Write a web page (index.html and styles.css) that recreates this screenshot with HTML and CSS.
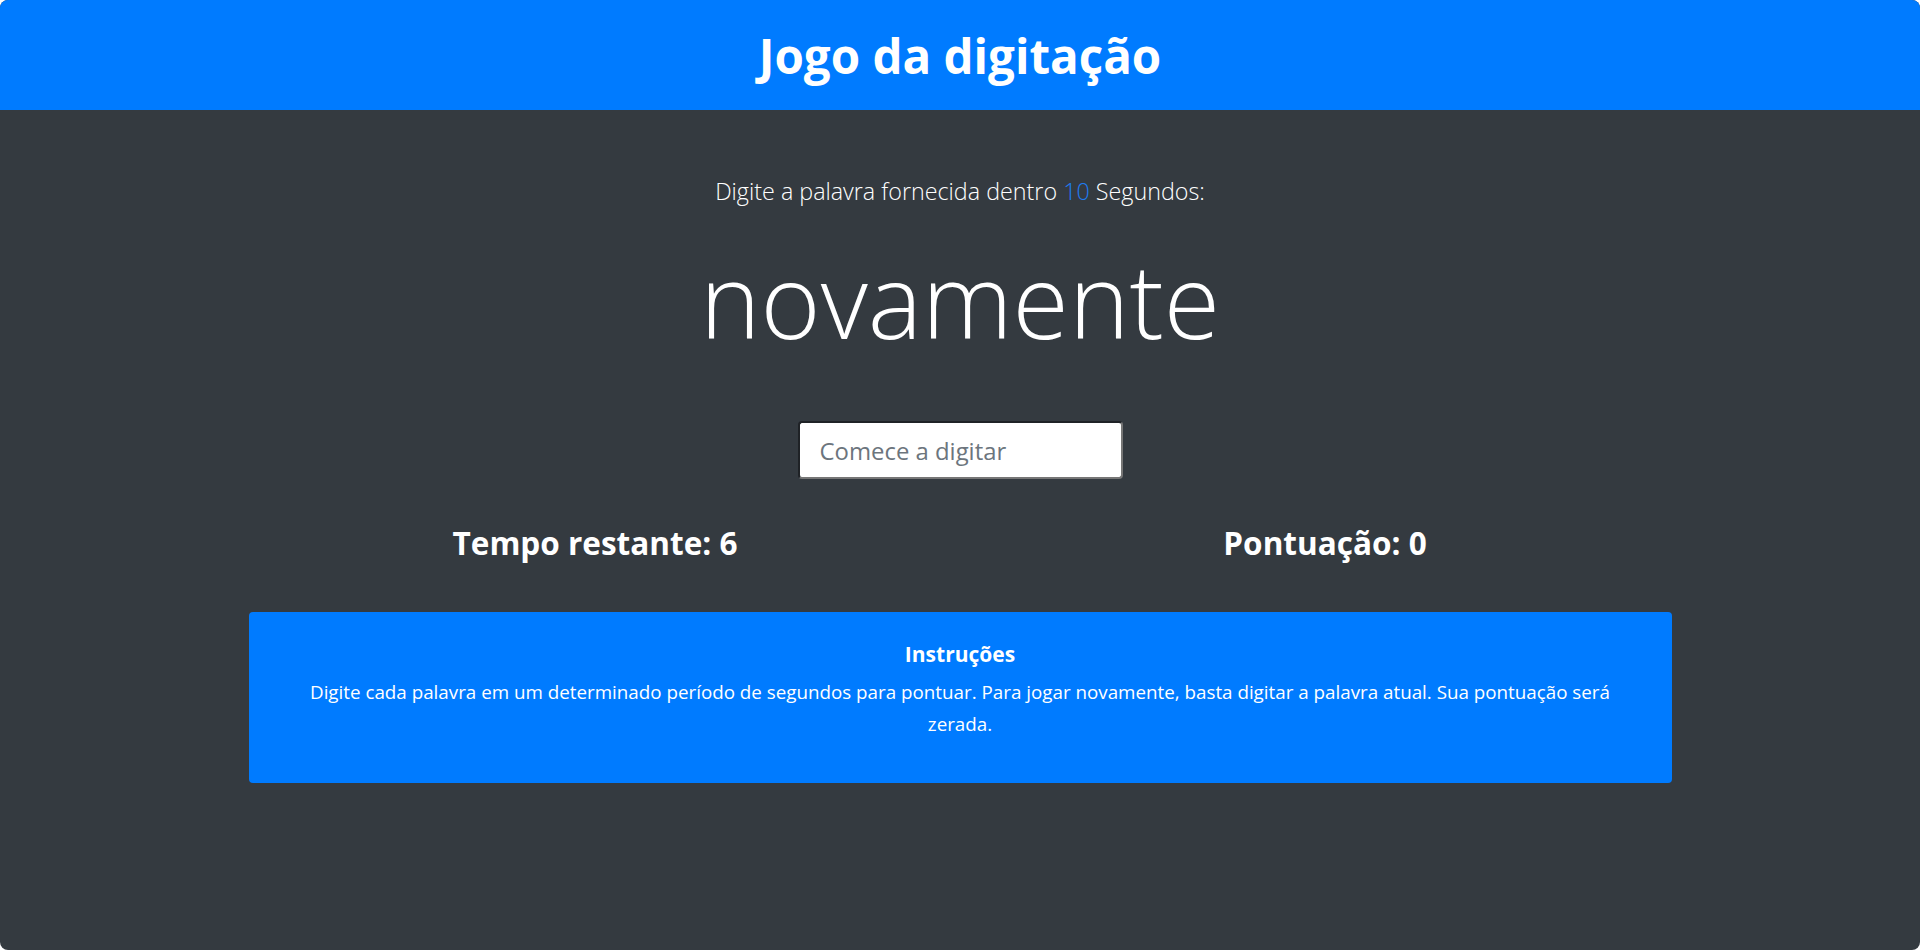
FILE: index.html
```html
<!DOCTYPE html>
<html lang="pt-BR">
<head>
<meta charset="utf-8">
<title>Jogo da digitação</title>
<link rel="stylesheet" href="styles.css">
</head>
<body>
<div class="window">
  <header class="topbar">
    <h1 class="title">Jogo da digitação</h1>
  </header>
  <main class="game">
    <p class="lead">Digite a palavra fornecida dentro <span class="seconds">10</span> Segundos:</p>
    <h2 class="word">novamente</h2>
    <input class="word-input" type="text" placeholder="Comece a digitar" autofocus>
    <div class="stats">
      <h3 class="stat">Tempo restante: <span>6</span></h3>
      <h3 class="stat">Pontuação: <span>0</span></h3>
    </div>
    <section class="card">
      <h5 class="card-title">Instruções</h5>
      <p class="card-text">Digite cada palavra em um determinado período de segundos para pontuar. Para jogar novamente, basta digitar a palavra atual. Sua pontuação será zerada.</p>
    </section>
  </main>
</div>
</body>
</html>
```

FILE: styles.css
```css
html {
  background: #ffffff;
}
body {
  margin: 0;
  font-family: "Open Sans", "Noto Sans", "Liberation Sans", sans-serif;
  color: #ffffff;
}
.window {
  height: 950px;
  background: #343a40;
  border-radius: 8px;
  overflow: hidden;
  display: flex;
  flex-direction: column;
}
.topbar {
  height: 110px;
  background: #007bff;
  display: flex;
  align-items: center;
  justify-content: center;
}
.title {
  margin: 0;
  font-size: 47.5px;
  font-weight: 700;
  line-height: 1.2;
}
.game {
  display: flex;
  flex-direction: column;
  align-items: center;
  padding-top: 63px;
}
.lead {
  margin: 0;
  font-size: 23.3px;
  font-weight: 300;
  line-height: 36px;
}
.seconds {
  color: #1e7cf2;
}
.word {
  margin: 30px 0 0;
  font-size: 102.5px;
  font-weight: 300;
  line-height: 120px;
}
.word-input {
  margin-top: 62px;
  box-sizing: border-box;
  width: 325px;
  height: 58px;
  padding: 0 20px;
  font-family: inherit;
  font-size: 23.9px;
  color: #495057;
  background: #ffffff;
  border: 2px solid;
  border-color: #1f2226 #767676 #767676 #1f2226;
  border-radius: 4px;
  outline: none;
}
.word-input::placeholder {
  color: #6c757d;
}
.stats {
  margin-top: 46px;
  width: 1460px;
  display: grid;
  grid-template-columns: 1fr 1fr;
}
.stat {
  margin: 0;
  text-align: center;
  font-size: 31.5px;
  font-weight: 700;
  line-height: 36px;
}
.card {
  margin-top: 51px;
  box-sizing: border-box;
  width: 1423px;
  height: 171px;
  background: #007bff;
  border-radius: 4px;
  padding: 27px 44px 0;
  text-align: center;
}
.card-title {
  margin: 0;
  font-size: 21px;
  font-weight: 700;
  line-height: 30px;
}
.card-text {
  margin: 7px 0 0;
  font-size: 18.8px;
  line-height: 32px;
}
```
